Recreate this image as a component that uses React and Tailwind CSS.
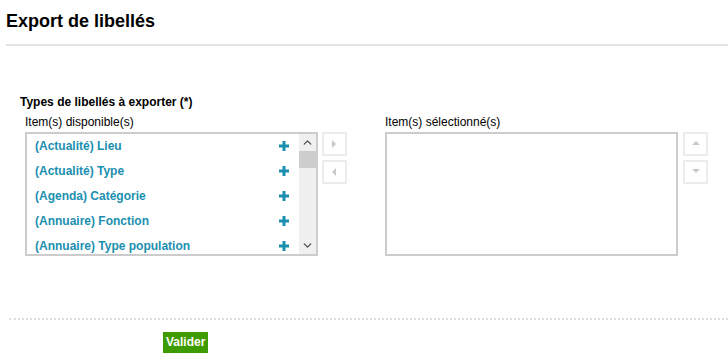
import { ChevronUp, ChevronDown } from 'lucide-react'

const items = [
  '(Actualité) Lieu',
  '(Actualité) Type',
  '(Agenda) Catégorie',
  '(Annuaire) Fonction',
  '(Annuaire) Type population',
]

function Plus() {
  return (
    <svg width="10" height="10" viewBox="0 0 10 10">
      <rect x="3.5" y="0" width="3" height="10" fill="#1a8fb0" />
      <rect x="0" y="3.5" width="10" height="3" fill="#1a8fb0" />
    </svg>
  )
}

function Tri({ dir }) {
  const pts = {
    right: '1,0 5,4 1,8',
    left: '5,0 1,4 5,8',
    up: '0,5 4,1 8,5',
    down: '0,1 4,5 8,1',
  }
  return (
    <svg width="8" height="8" viewBox="0 0 8 8">
      <polygon points={pts[dir]} fill="#c9c9c9" />
    </svg>
  )
}

function SmallBtn({ dir }) {
  return (
    <div className="w-[25px] h-[24px] border-2 border-[#ececec] flex items-center justify-center">
      <Tri dir={dir} />
    </div>
  )
}

export default function App() {
  return (
    <div className="w-[728px] h-[361px] bg-white text-black overflow-hidden" style={{ fontFamily: '"Liberation Sans", Arial, sans-serif' }}>
      {/* Titre */}
      <div className="ml-[6px] pt-[10px] pb-[11px] border-b-2 border-[#e3e3e3]">
        <h1 className="text-[18px] font-bold leading-[23px]">Export de libellés</h1>
      </div>

      <div className="pt-[49px] pl-[20px]">
        <div className="text-[12px] font-bold leading-[14px]">Types de libellés à exporter (*)</div>

        <div className="flex mt-[6px] pl-[5px]">
          {/* Disponibles */}
          <div className="flex flex-col">
            <div className="text-[12px] leading-[14px] mb-[3px]">Item(s) disponible(s)</div>
            <div className="w-[293px] h-[124px] border-2 border-[#cccccc] flex overflow-hidden">
              <div className="flex-1 flex flex-col overflow-hidden">
                {items.map((it) => (
                  <div key={it} className="h-[25px] shrink-0 flex items-center justify-between pl-[8px] pr-[10px] pb-[1px]">
                    <span className="text-[12px] font-bold text-[#1a8fb0]">{it}</span>
                    <Plus />
                  </div>
                ))}
              </div>
              <div className="w-[17px] bg-[#f0f0f0] flex flex-col items-center">
                <div className="h-[17px] flex items-center justify-center">
                  <ChevronUp size={13} strokeWidth={2.5} color="#505050" />
                </div>
                <div className="w-full h-[17px] bg-[#cdcdcd]" />
                <div className="flex-1" />
                <div className="h-[17px] flex items-center justify-center">
                  <ChevronDown size={13} strokeWidth={2.5} color="#505050" />
                </div>
              </div>
            </div>
          </div>

          <div className="flex flex-col gap-[4px] mt-[17px] ml-[4px]">
            <SmallBtn dir="right" />
            <SmallBtn dir="left" />
          </div>

          {/* Sélectionnés */}
          <div className="flex flex-col ml-[38px]">
            <div className="text-[12px] leading-[14px] mb-[3px]">Item(s) sélectionné(s)</div>
            <div className="w-[293px] h-[124px] border-2 border-[#cccccc]" />
          </div>

          <div className="flex flex-col gap-[4px] mt-[17px] ml-[5px]">
            <SmallBtn dir="up" />
            <SmallBtn dir="down" />
          </div>
        </div>
      </div>

      {/* Pied */}
      <div className="ml-[9px] mt-[62px] border-t-2 border-dotted border-[#dddddd]" />
      <div className="pl-[163px] pt-[9px]">
        <button className="bg-[#3f9c00] text-white text-[12px] font-bold px-[3px] h-[21px] leading-[21px]">Valider</button>
      </div>
    </div>
  )
}
